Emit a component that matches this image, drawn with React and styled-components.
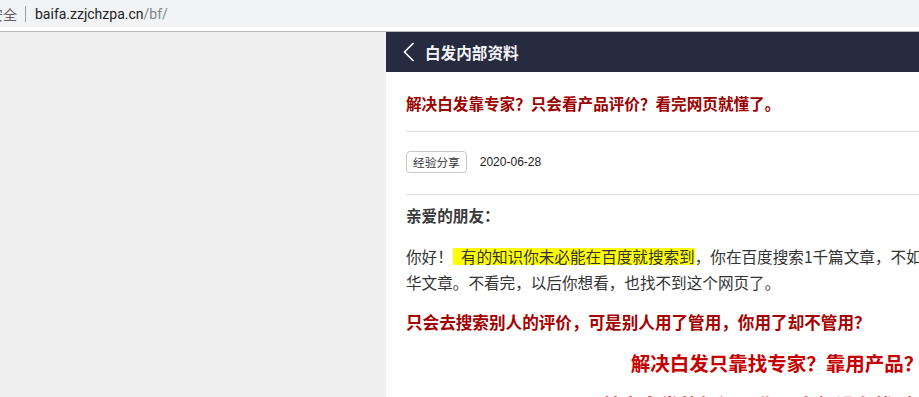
import React from "react";
import styled, { createGlobalStyle } from "styled-components";

const GlobalStyle = createGlobalStyle`
  html, body {
    margin: 0;
    padding: 0;
    overflow: hidden;
    background: #efefef;
  }
  body {
    font-family: "Noto Sans CJK SC", "Noto Sans", sans-serif;
  }
`;

const BrowserBar = styled.div`
  height: 27px;
  background: #f1f3f4;
  display: flex;
  align-items: center;
  font-family: Roboto, "Noto Sans CJK SC", sans-serif;
  font-size: 14px;
  white-space: nowrap;
`;

const Secure = styled.span`
  margin-left: -25px;
  color: #5f6368;
  font-family: "Noto Sans CJK SC", sans-serif;
  font-size: 14px;
`;

const Divider = styled.span`
  width: 1px;
  height: 16px;
  background: #9aa0a6;
  margin: 0 9px 0 8px;
`;

const Host = styled.span`
  color: #202124;
`;

const Path = styled.span`
  color: #80868b;
`;

const BarGap = styled.div`
  height: 4px;
  background: #fff;
  border-bottom: 1px solid #b8b8b8;
`;

const Viewport = styled.div`
  display: flex;
  align-items: flex-start;
`;

const Side = styled.div`
  flex: 0 0 386px;
  height: 380px;
  background: #efefef;
`;

const Page = styled.div`
  flex: 0 0 762px;
  background: #fff;
  min-height: 380px;
`;

const Header = styled.div`
  height: 40px;
  background: #262b40;
  display: flex;
  align-items: center;
  padding-left: 17px;
  gap: 10px;
`;

const HeaderTitle = styled.h1`
  margin: 0;
  color: #f4f4f8;
  font-size: 15.6px;
  font-weight: bold;
  line-height: 20px;
`;

const Article = styled.div`
  padding: 0 0 0 20px;
`;

const Title = styled.h2`
  margin: 19px 0 0;
  padding-bottom: 16px;
  border-bottom: 1px solid #dcdcdc;
  color: #9c0000;
  font-size: 15.6px;
  font-weight: bold;
  line-height: 24px;
`;

const Meta = styled.div`
  display: flex;
  align-items: center;
  gap: 13px;
  padding: 19px 0 21px;
  border-bottom: 1px solid #dcdcdc;
`;

const Tag = styled.span`
  height: 20px;
  padding: 0 6px;
  border: 1px solid #c8c8c8;
  border-radius: 4px;
  font-size: 11.7px;
  line-height: 20px;
  color: #333;
`;

const Date = styled.span`
  font-family: "Liberation Sans", Arial, sans-serif;
  font-size: 12px;
  color: #222;
`;

const Greeting = styled.p`
  margin: 8px 0 0;
  font-size: 15.6px;
  font-weight: bold;
  line-height: 24px;
  color: #3a3a3a;
`;

const Para = styled.p`
  margin: 16px 0 0;
  font-size: 15.6px;
  line-height: 26px;
  color: #333;
  white-space: nowrap;
`;

const Mark = styled.span`
  padding-left: 8px;
  background: linear-gradient(
    transparent 3px,
    #ffff00 3px,
    #ffff00 20px,
    transparent 20px
  );
`;

const Alert = styled.p`
  margin: 14px 0 0;
  font-size: 16.6px;
  font-weight: bold;
  line-height: 26px;
  color: #a50000;
  white-space: nowrap;
`;

const Headline = styled.p`
  margin: ${(p) => p.$top}px 0 0;
  text-align: center;
  font-size: 19.5px;
  font-weight: bold;
  line-height: 30px;
  color: ${(p) => p.$color};
  white-space: nowrap;
`;

const Chevron = () => (
  <svg width="12" height="20" viewBox="0 0 12 20">
    <path
      d="M10.5 1 L1.5 10 L10.5 19"
      fill="none"
      stroke="#fff"
      strokeWidth="1.6"
    />
  </svg>
);

export default function App() {
  return (
    <>
      <GlobalStyle />
      <BrowserBar>
        <Secure>不安全</Secure>
        <Divider />
        <Host>baifa.zzjchzpa.cn</Host>
        <Path>/bf/</Path>
      </BrowserBar>
      <BarGap />
      <Viewport>
        <Side />
        <Page>
          <Header>
            <Chevron />
            <HeaderTitle>白发内部资料</HeaderTitle>
          </Header>
          <Article>
            <Title>解决白发靠专家？只会看产品评价？看完网页就懂了。</Title>
            <Meta>
              <Tag>经验分享</Tag>
              <Date>2020-06-28</Date>
            </Meta>
            <Greeting>亲爱的朋友：</Greeting>
            <Para>
              你好！<Mark>有的知识你未必能在百度就搜索到</Mark>，你在百度搜索1千篇文章，不如认真看完这一篇精
              <br />
              华文章。不看完，以后你想看，也找不到这个网页了。
            </Para>
            <Alert>只会去搜索别人的评价，可是别人用了管用，你用了却不管用？</Alert>
            <Headline $top={13} $color="#c40000">
              解决白发只靠找专家？靠用产品？
            </Headline>
            <Headline $top={12} $color="#d03030">
              其实白发的根源，你一直都没有找对方法
            </Headline>
          </Article>
        </Page>
      </Viewport>
    </>
  );
}
